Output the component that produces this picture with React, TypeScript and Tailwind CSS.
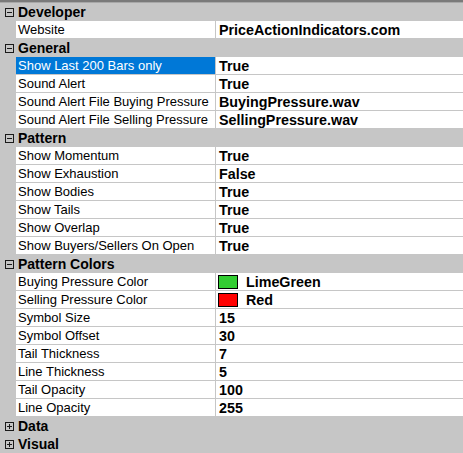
type Prop = { name: string; value: string; swatch?: string; selected?: boolean };
type Cat = { title: string; open: boolean; props: Prop[] };

const cats: Cat[] = [
  { title: "Developer", open: true, props: [{ name: "Website", value: "PriceActionIndicators.com" }] },
  {
    title: "General",
    open: true,
    props: [
      { name: "Show Last 200 Bars only", value: "True", selected: true },
      { name: "Sound Alert", value: "True" },
      { name: "Sound Alert File Buying Pressure", value: "BuyingPressure.wav" },
      { name: "Sound Alert File Selling Pressure", value: "SellingPressure.wav" },
    ],
  },
  {
    title: "Pattern",
    open: true,
    props: [
      { name: "Show Momentum", value: "True" },
      { name: "Show Exhaustion", value: "False" },
      { name: "Show Bodies", value: "True" },
      { name: "Show Tails", value: "True" },
      { name: "Show Overlap", value: "True" },
      { name: "Show Buyers/Sellers On Open", value: "True" },
    ],
  },
  {
    title: "Pattern Colors",
    open: true,
    props: [
      { name: "Buying Pressure Color", value: "LimeGreen", swatch: "#32cd32" },
      { name: "Selling Pressure Color", value: "Red", swatch: "#ff0000" },
      { name: "Symbol Size", value: "15" },
      { name: "Symbol Offset", value: "30" },
      { name: "Tail Thickness", value: "7" },
      { name: "Line Thickness", value: "5" },
      { name: "Tail Opacity", value: "100" },
      { name: "Line Opacity", value: "255" },
    ],
  },
  { title: "Data", open: false, props: [] },
  { title: "Visual", open: false, props: [] },
];

function Toggle({ open }: { open: boolean }) {
  return (
    <svg width="9" height="9" viewBox="0 0 9 9" className="shrink-0">
      <rect x="0.5" y="0.5" width="8" height="8" fill="none" stroke="#1a1a1a" />
      <line x1="2" y1="4.5" x2="7" y2="4.5" stroke="#1a1a1a" />
      {!open && <line x1="4.5" y1="2" x2="4.5" y2="7" stroke="#1a1a1a" />}
    </svg>
  );
}

function PropRow({ p }: { p: Prop }) {
  return (
    <div className="flex h-[18px]">
      <div className="w-[16px] shrink-0 bg-[#c6c6c6]" />
      <div
        className={`w-[199px] shrink-0 border-b border-[#c6c6c6] pl-[2px] leading-[17px] whitespace-nowrap overflow-hidden ${
          p.selected ? "bg-[#0078d7] text-white" : "bg-white text-black"
        }`}
      >
        {p.name}
      </div>
      <div className="w-px shrink-0 bg-[#c6c6c6]" />
      <div className="flex flex-1 items-center border-b border-[#c6c6c6] bg-white pl-[3px] text-[14.3px] font-bold text-black whitespace-nowrap">
        {p.swatch && (
          <span
            className="mr-[8px] ml-[-1px] h-[14px] w-[20px] shrink-0 border border-black"
            style={{ backgroundColor: p.swatch }}
          />
        )}
        <span className="pt-[1px] leading-[17px]">{p.value}</span>
      </div>
    </div>
  );
}

export default function App() {
  return (
    <div
      className="flex h-[453px] w-[463px] flex-col overflow-hidden bg-[#c6c6c6] text-[13px]"
      style={{ fontFamily: '"Liberation Sans", Arial, sans-serif' }}
    >
      <div className="h-[3px] shrink-0 border-t-2 border-[#7a7a7a] bg-[#a8a8a8]" />
      {cats.map((c) => (
        <div key={c.title} className="flex flex-col">
          <div className="flex h-[18px] items-center bg-[#c6c6c6]">
            <div className="flex w-[17px] shrink-0 justify-center pl-[1px]">
              <Toggle open={c.open} />
            </div>
            <span className="pl-[1px] text-[14px] font-bold text-black leading-[18px]">{c.title}</span>
          </div>
          {c.open && c.props.map((p) => <PropRow key={p.name} p={p} />)}
        </div>
      ))}
    </div>
  );
}
